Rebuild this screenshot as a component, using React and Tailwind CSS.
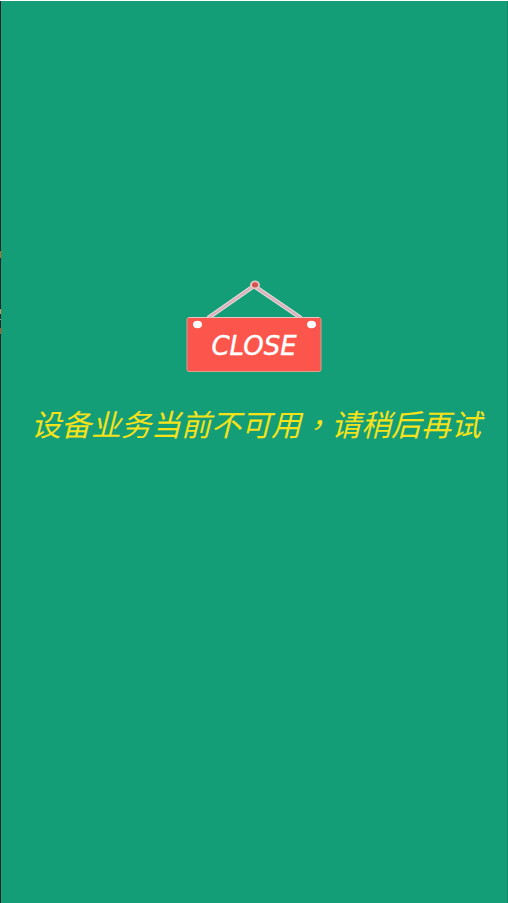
function CloseSign() {
  return (
    <svg
      className="block h-[93px] w-[136px]"
      viewBox="0 0 136 93"
      role="img"
      aria-label="CLOSE"
    >
      <path d="M22 38 L68 6 L115 38" fill="none" stroke="#e6dcdc" strokeWidth="4.4" />
      <path d="M22 38 L68 6 L115 38" fill="none" stroke="#d9b3bb" strokeWidth="2.4" />
      <ellipse cx="69" cy="4.8" rx="5" ry="4.4" fill="#e3c3bf" />
      <ellipse cx="69" cy="4.8" rx="3" ry="2.6" fill="#d84f4f" />
      <rect x="1" y="37.5" width="134" height="54" rx="2" fill="#fb554c" stroke="#d9a08b" />
      <path d="M3 37.5 H133" stroke="#e3c6c8" />
      <path d="M3 40 V90 M129 45 V89" stroke="#ed5263" />
      <ellipse cx="11.5" cy="44.5" rx="4.5" ry="3.7" fill="#fff" />
      <ellipse cx="125.5" cy="44.5" rx="4.5" ry="3.7" fill="#fff" />
      <text
        x="68"
        y="75"
        textAnchor="middle"
        fill="#fff"
        className="font-['DejaVu_Sans',sans-serif] text-[26px] italic"
        stroke="#fff"
        strokeWidth="0.4"
      >
        CLOSE
      </text>
    </svg>
  );
}

export default function App() {
  return (
    <div className="flex min-h-screen border-t border-t-white bg-[#149e77]">
      <div className="w-px bg-[linear-gradient(#202225_250px,#c8642a_250px_257px,#202225_257px_308px,#d98a50_308px_313px,#202225_313px_318px,#a89a90_318px_319px,#202225_319px_327px,#c8501e_327px_333px,#202225_333px)]" />
      <main className="flex flex-1 flex-col items-center border-r border-r-[#118867] pt-[279px]">
        <CloseSign />
        <p className="mt-[30px] pl-1 text-center whitespace-nowrap text-[30px] leading-10 text-[#f4e21b] italic font-['Noto_Sans_CJK_SC','Noto_Sans_CJK_TC',sans-serif]">
          设备业务当前不可用
          <span lang="zh-TW" className="font-['Noto_Sans_CJK_TC',sans-serif]">，</span>
          请稍后再试
        </p>
      </main>
    </div>
  );
}
